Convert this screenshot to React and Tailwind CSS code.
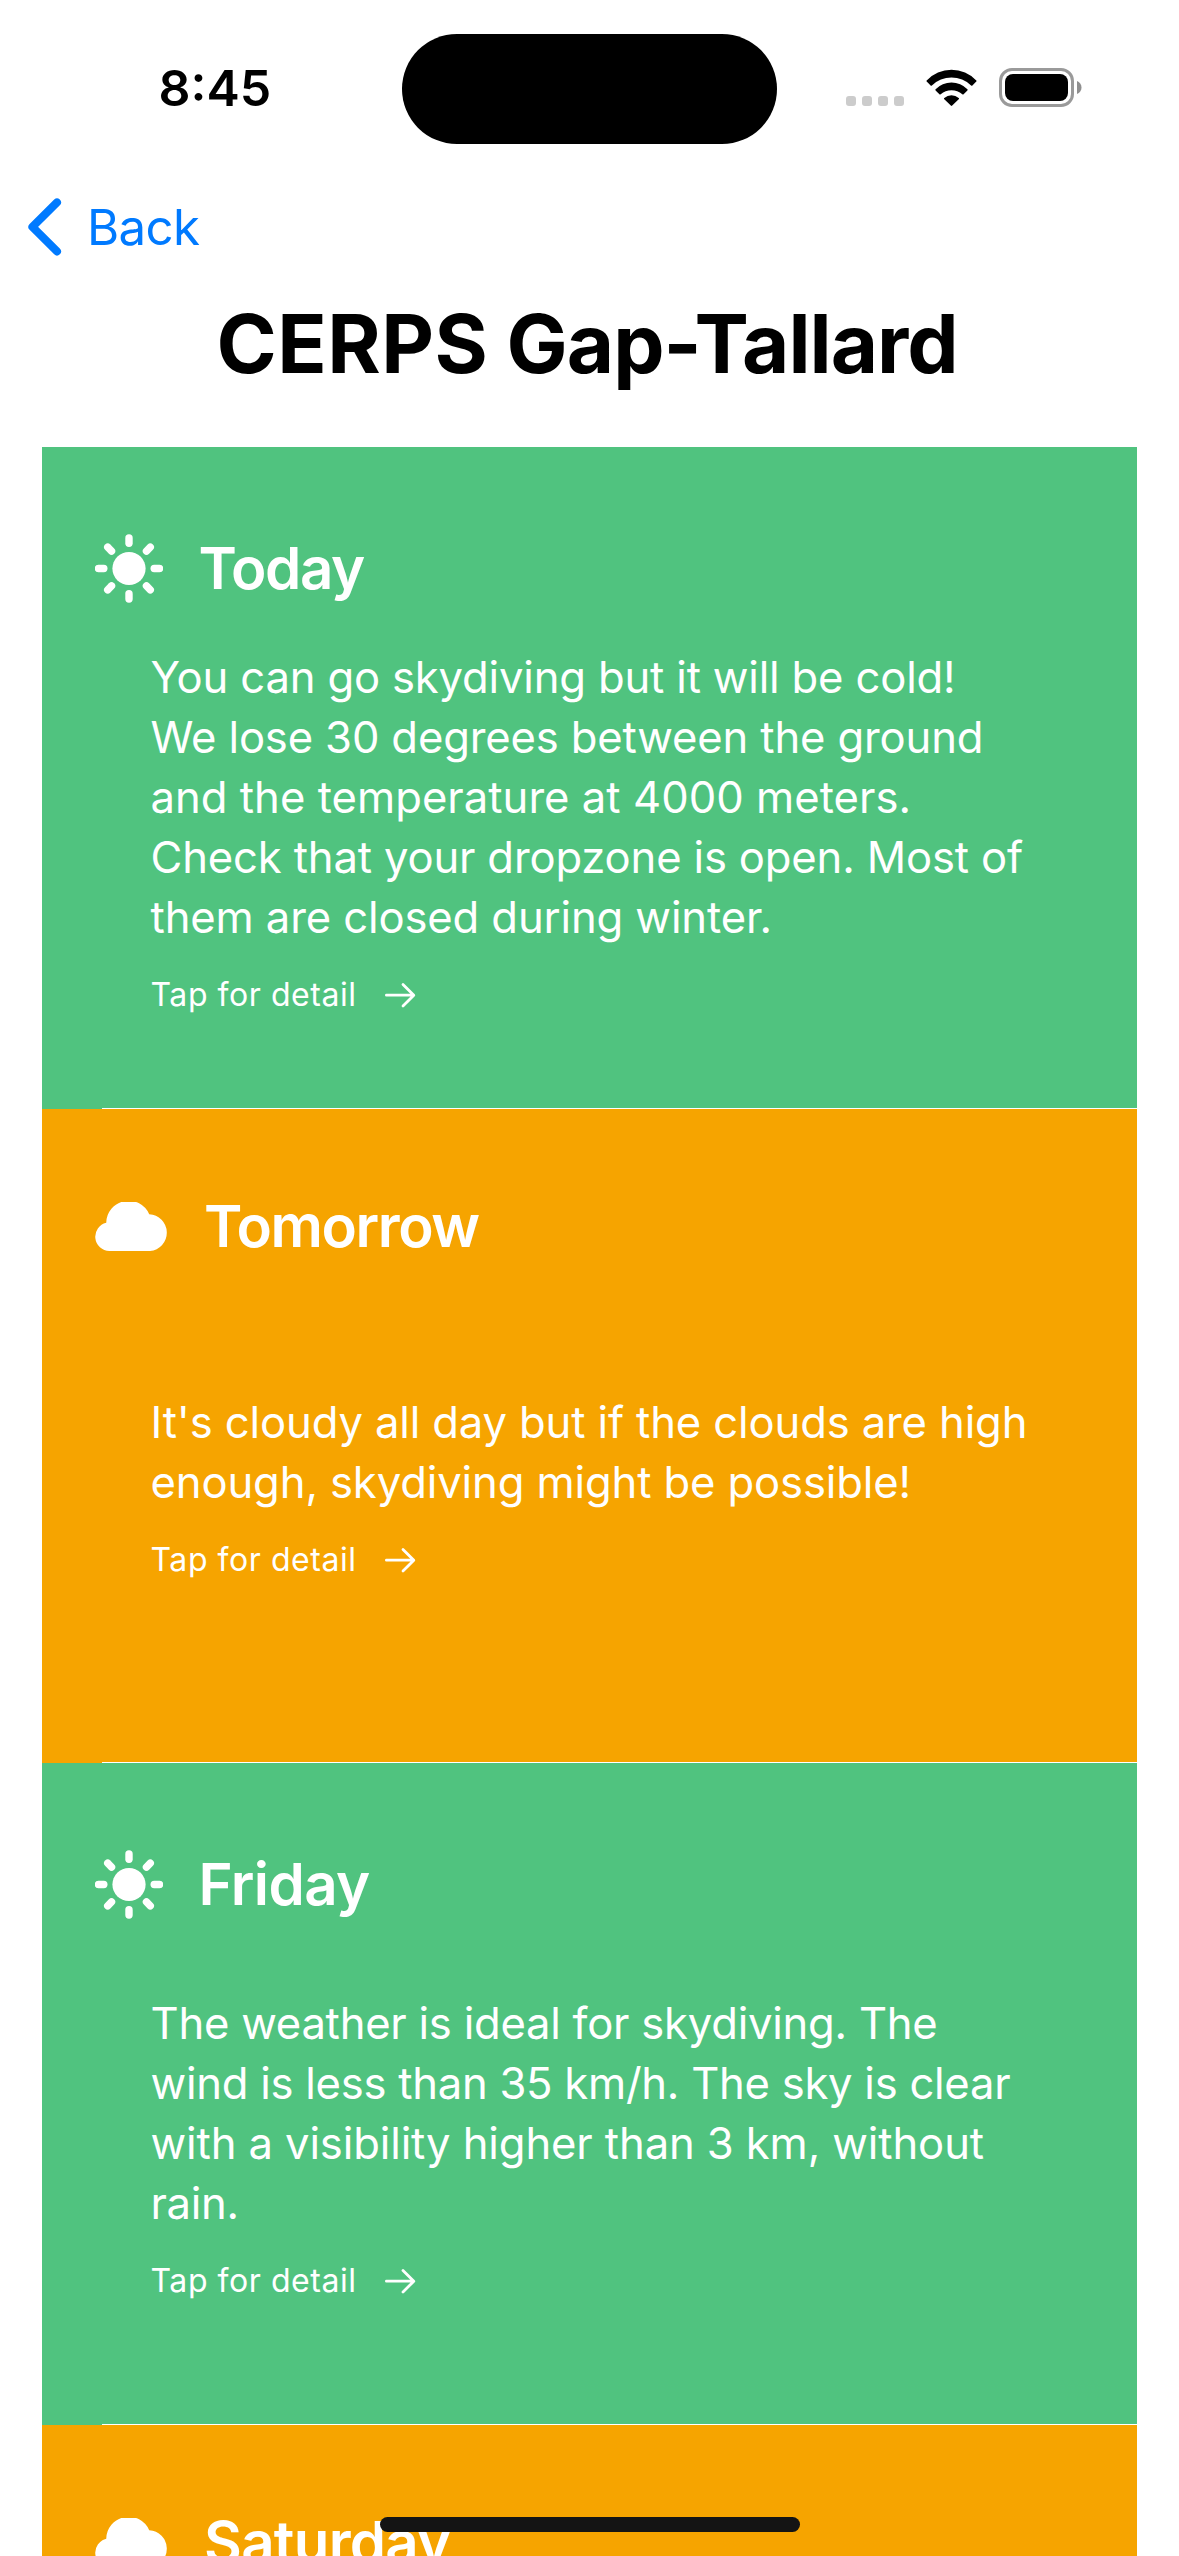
import React from "react";

const days = [
  {
    name: "Today",
    good: true,
    tracking: "tracking-[-1.4px]",
    lines: [
      ["You can go skydiving but it will be cold!", "tracking-[-0.17px]"],
      ["We lose 30 degrees between the ground", "tracking-[-0.15px]"],
      ["and the temperature at 4000 meters.", "tracking-[0.03px]"],
      ["Check that your dropzone is open. Most of", "tracking-[-0.16px]"],
      ["them are closed during winter.", "tracking-[-0.12px]"],
    ],
  },
  {
    name: "Tomorrow",
    good: false,
    tracking: "tracking-[-1.4px]",
    lines: [
      ["It's cloudy all day but if the clouds are high", "tracking-[-0.13px]"],
      ["enough, skydiving might be possible!", "tracking-[-0.12px]"],
    ],
  },
  {
    name: "Friday",
    good: true,
    tracking: "tracking-[-0.6px]",
    lines: [
      ["The weather is ideal for skydiving. The", "tracking-[-0.24px]"],
      ["wind is less than 35 km/h. The sky is clear", "tracking-[-0.26px]"],
      ["with a visibility higher than 3 km, without", "tracking-[-0.11px]"],
      ["rain.", "tracking-[-0.3px]"],
    ],
  },
  { name: "Saturday", good: false, tracking: "tracking-[-0.7px]", lines: [] },
];

function SunIcon() {
  return (
    <svg width="68" height="69" viewBox="-34 -34.5 68 69" className="shrink-0">
      <circle r="16.6" fill="white" />
      {[0, 90, 180, 270].map((a) => (
        <path key={a} d="M0 -25.2V-30.6" transform={`rotate(${a})`} stroke="white" strokeWidth="7.4" strokeLinecap="round" />
      ))}
      {[45, 135, 225, 315].map((a) => (
        <path key={a} d="M0 -24.7V-30.1" transform={`rotate(${a})`} stroke="white" strokeWidth="7.4" strokeLinecap="round" />
      ))}
    </svg>
  );
}

function CloudIcon() {
  return (
    <svg width="73.5" height="49" viewBox="0 0 73.2 49" preserveAspectRatio="none" className="shrink-0">
      <path
        fill="white"
        d="M14.3 49A14.3 14.3 0 0 1 11.2 20.8A22.3 22.3 0 0 1 54 12.3A18.4 18.4 0 0 1 54.8 49Z"
      />
    </svg>
  );
}

function ArrowIcon() {
  return (
    <svg width="31" height="28" viewBox="0 0 31 28" fill="none" stroke="white" strokeWidth="2.8" strokeLinecap="round" strokeLinejoin="round">
      <path d="M1.4 14.2H28.6M18 3.4L28.8 14.2L18 25" />
    </svg>
  );
}

function WifiIcon() {
  return (
    <svg width="51" height="37" viewBox="0 0 51 37" fill="black">
      <path d="M0.7 11.4A34 34 0 0 1 50.3 11.4Q50.9 12 50.3 12.6L46.4 16.4Q45.8 17 45.1 16.4A28.2 28.2 0 0 0 5.9 16.4Q5.2 17 4.6 16.4L0.7 12.6Q0.1 12 0.7 11.4Z" />
      <path d="M9.6 20.3A22.2 22.2 0 0 1 41.4 20.3Q42 20.9 41.4 21.5L37.6 25.2Q37 25.8 36.3 25.2A16.4 16.4 0 0 0 14.7 25.2Q14 25.8 13.4 25.2L9.6 21.5Q9 20.9 9.6 20.3Z" />
      <path d="M18.3 29A11 11 0 0 1 32.7 29Q33.4 29.7 32.7 30.3L26.2 36.6Q25.5 37.2 24.8 36.6L18.3 30.3Q17.6 29.7 18.3 29Z" />
    </svg>
  );
}

function Battery() {
  return (
    <div className="flex items-center">
      <div className="h-[39px] w-[75px] rounded-[13px] border-[3px] border-[#9a9a9a] p-[3px]">
        <div className="h-full w-full rounded-[8px] bg-black" />
      </div>
      <svg width="5" height="13" viewBox="0 0 5 13" className="ml-[3px]">
        <path d="M0 0C2.7 1 4.5 3.5 4.5 6.5S2.7 12 0 13Z" fill="#8f8f8f" />
      </svg>
    </div>
  );
}

function DayCard({ day }) {
  return (
    <article
      className={
        day.good
          ? "flex h-[662px] shrink-0 flex-col bg-[#50c37f] pt-[86px]"
          : "flex h-[654px] shrink-0 flex-col bg-[#f6a400] pt-[82px]"
      }
    >
      <header className="flex h-[70px] shrink-0 items-center gap-[35.5px] pl-[53px]">
        {day.good ? <SunIcon /> : <CloudIcon />}
        <h2 className={`text-[58.2px] leading-[70px] font-semibold ${day.tracking}`}>{day.name}</h2>
      </header>
      <div
        className={
          day.good
            ? "flex flex-1 flex-col justify-center pb-[49.5px] pl-[108.5px]"
            : "flex flex-1 flex-col justify-center pb-[51.5px] pl-[108.5px]"
        }
      >
        {day.lines.length > 0 && (
          <>
            <p className="pt-[0.5px] text-[43.6px] leading-[60px]">
              {day.lines.map(([text, tracking]) => (
                <span key={text} className={`block whitespace-nowrap ${tracking}`}>
                  {text}
                </span>
              ))}
            </p>
            <div className="mt-[27px] flex h-10 items-center">
              <span className="w-[234px] text-[32px] leading-10 tracking-[0.55px] whitespace-nowrap">Tap for detail</span>
              <ArrowIcon />
            </div>
          </>
        )}
      </div>
      <div className="ml-[60px] h-px bg-white" />
    </article>
  );
}

export default function App() {
  return (
    <main className="relative flex h-[2556px] w-[1179px] flex-col overflow-hidden bg-white font-['Inter',sans-serif] text-black">
      <div className="grid h-[197px] shrink-0 grid-cols-[402px_375px_402px] items-start">
        <div className="pt-[58px] pl-[158.5px] text-[50px] leading-[60px] font-semibold">8:45</div>
        <div className="mt-[33.5px] h-[110.5px] rounded-full bg-black" />
        <div className="flex items-start pt-[68px] pl-[69px]">
          <div className="mt-[28px] flex gap-[6px]">
            <span className="size-[10px] rounded-[3px] bg-[#cccccc]" />
            <span className="size-[10px] rounded-[3px] bg-[#cccccc]" />
            <span className="size-[10px] rounded-[3px] bg-[#cccccc]" />
            <span className="size-[10px] rounded-[3px] bg-[#cccccc]" />
          </div>
          <div className="mt-px ml-[22px]">
            <WifiIcon />
          </div>
          <div className="ml-[22px]">
            <Battery />
          </div>
        </div>
      </div>

      <nav className="flex h-[60px] shrink-0 items-center pl-[27px] text-[#007aff]">
        <svg width="36" height="60" viewBox="0 0 36 60" fill="none" stroke="currentColor" strokeWidth="8" strokeLinecap="round" strokeLinejoin="round">
          <path d="M30 5.4L5.4 29.9L30 54.4" />
        </svg>
        <span className="ml-[24px] text-[49.2px] leading-[60px] tracking-[-0.6px]">Back</span>
      </nav>

      <h1 className="mt-[36.5px] shrink-0 pl-[216.5px] text-[81.5px] leading-[100px] font-bold tracking-[-0.95px] whitespace-nowrap">
        <span className="tracking-[0.45px]">CERPS</span> Gap-Tallard
      </h1>

      <section className="mt-[53.5px] flex w-[1095px] shrink-0 flex-col self-center text-white">
        {days.map((day) => (
          <DayCard key={day.name} day={day} />
        ))}
      </section>

      <div className="absolute top-[2517px] left-[380px] h-[15px] w-[420px] rounded-full bg-[#141414]" />
    </main>
  );
}
